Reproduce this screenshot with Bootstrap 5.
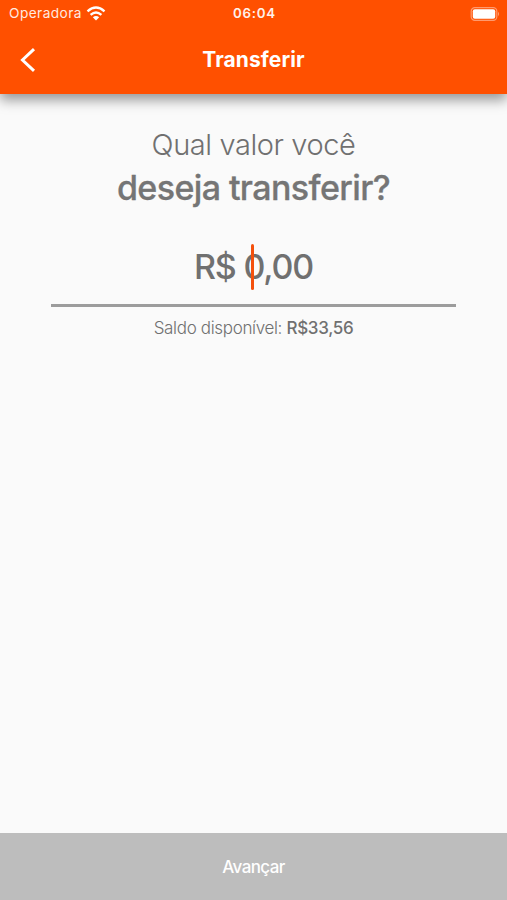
<!DOCTYPE html>
<html lang="pt-BR">
<head>
<meta charset="utf-8">
<meta name="viewport" content="width=device-width, initial-scale=1">
<title>Transferir</title>
<link href="https://cdn.jsdelivr.net/npm/bootstrap@5.3.0/dist/css/bootstrap.min.css" rel="stylesheet">
<style>
body{font-family:Inter,"Liberation Sans",sans-serif;background:#fafafa;color:#757575;height:100vh;overflow:hidden}
.app-header{height:94px;background:#ff5000;color:#fff;box-shadow:0 6px 12px rgba(0,0,0,.4);z-index:1}
.status{height:27px;font-size:13.5px;line-height:27px;padding:0 7px 0 9px}
.carrier{opacity:.88;letter-spacing:.42px;font-size:13.7px}
.clock{font-weight:600;letter-spacing:.75px;opacity:.92;font-size:13.3px}
.titlebar{height:66px}
.side{width:56px;flex:none}
.title{font-size:21px;font-weight:700;line-height:30px;letter-spacing:.1px}
.ask{font-size:29px;font-weight:300;line-height:43px;margin-top:29px;letter-spacing:-.42px;color:#707070}
.ask-strong{font-size:34px;font-weight:500;line-height:43px;letter-spacing:-.6px;-webkit-text-stroke:.3px #757575}
.amount-field{width:405px;height:67px;margin-top:31px;padding-top:6px;border-bottom:3px solid #9c9c9c}
.amount{font-size:34px;font-weight:500;line-height:42px;color:#707070;letter-spacing:-1.2px}
.caret{width:3px;height:46px;background:#f4500c;left:200px;top:4px}
.balance{font-size:17px;font-weight:300;line-height:24px;margin-top:9px;color:#707070;letter-spacing:-.34px}
.balance span{display:inline-block;white-space:nowrap}
.next{height:67px;background:#bdbdbd;color:#fff;font-size:17px;font-weight:500;border-radius:0;border:0;letter-spacing:-.6px;padding-top:9px}
</style>
</head>
<body class="d-flex flex-column">
<header class="app-header position-relative flex-shrink-0">
  <div class="status d-flex align-items-center">
    <div class="col d-flex align-items-center"><span class="carrier">Operadora</span>
      <svg class="ms-1" width="20" height="16" viewBox="0 0 20 16" fill="none" stroke="#fff" stroke-width="2.4"><path d="M1.5 5.3Q10 -2.1 18.5 5.3M4.6 8.8Q10 4.1 15.4 8.8"/><path d="M6.8 11.2Q10 8.7 13.2 11.2L10 14.5Z" fill="#fff" stroke="none"/></svg>
    </div>
    <div class="clock">06:04</div>
    <div class="col d-flex justify-content-end">
      <svg width="30" height="14" viewBox="0 0 30 14"><rect x="1.2" y=".7" width="25.6" height="12.6" rx="3.6" fill="none" stroke="#ff9a6e" stroke-width="1.2"/><rect x="2.8" y="2.3" width="22.4" height="9.4" rx="2" fill="#fff"/><path d="M28 4.8Q30.2 7 28 9.2Z" fill="#ff9a6e"/></svg>
    </div>
  </div>
  <div class="titlebar d-flex align-items-center">
    <div class="side d-flex justify-content-center"><svg width="18" height="26" viewBox="0 0 18 26" fill="none" stroke="#fff" stroke-width="3"><path d="M15 2.2L3.5 13L15 23.8"/></svg></div>
    <div class="title flex-fill text-center">Transferir</div>
    <div class="side"></div>
  </div>
</header>
<main class="flex-grow-1 d-flex flex-column align-items-center text-center">
  <div class="ask">Qual valor você</div>
  <div class="ask-strong">deseja transferir?</div>
  <div class="amount-field position-relative"><div class="amount">R$ 0,00</div><span class="caret position-absolute rounded-pill"></span></div>
  <div class="balance"><span>Saldo disponível:</span> <span class="fw-medium">R$33,56</span></div>
</main>
<button class="next btn w-100 flex-shrink-0" type="button">Avançar</button>
<script src="https://cdn.jsdelivr.net/npm/bootstrap@5.3.0/dist/js/bootstrap.bundle.min.js"></script>
</body>
</html>
